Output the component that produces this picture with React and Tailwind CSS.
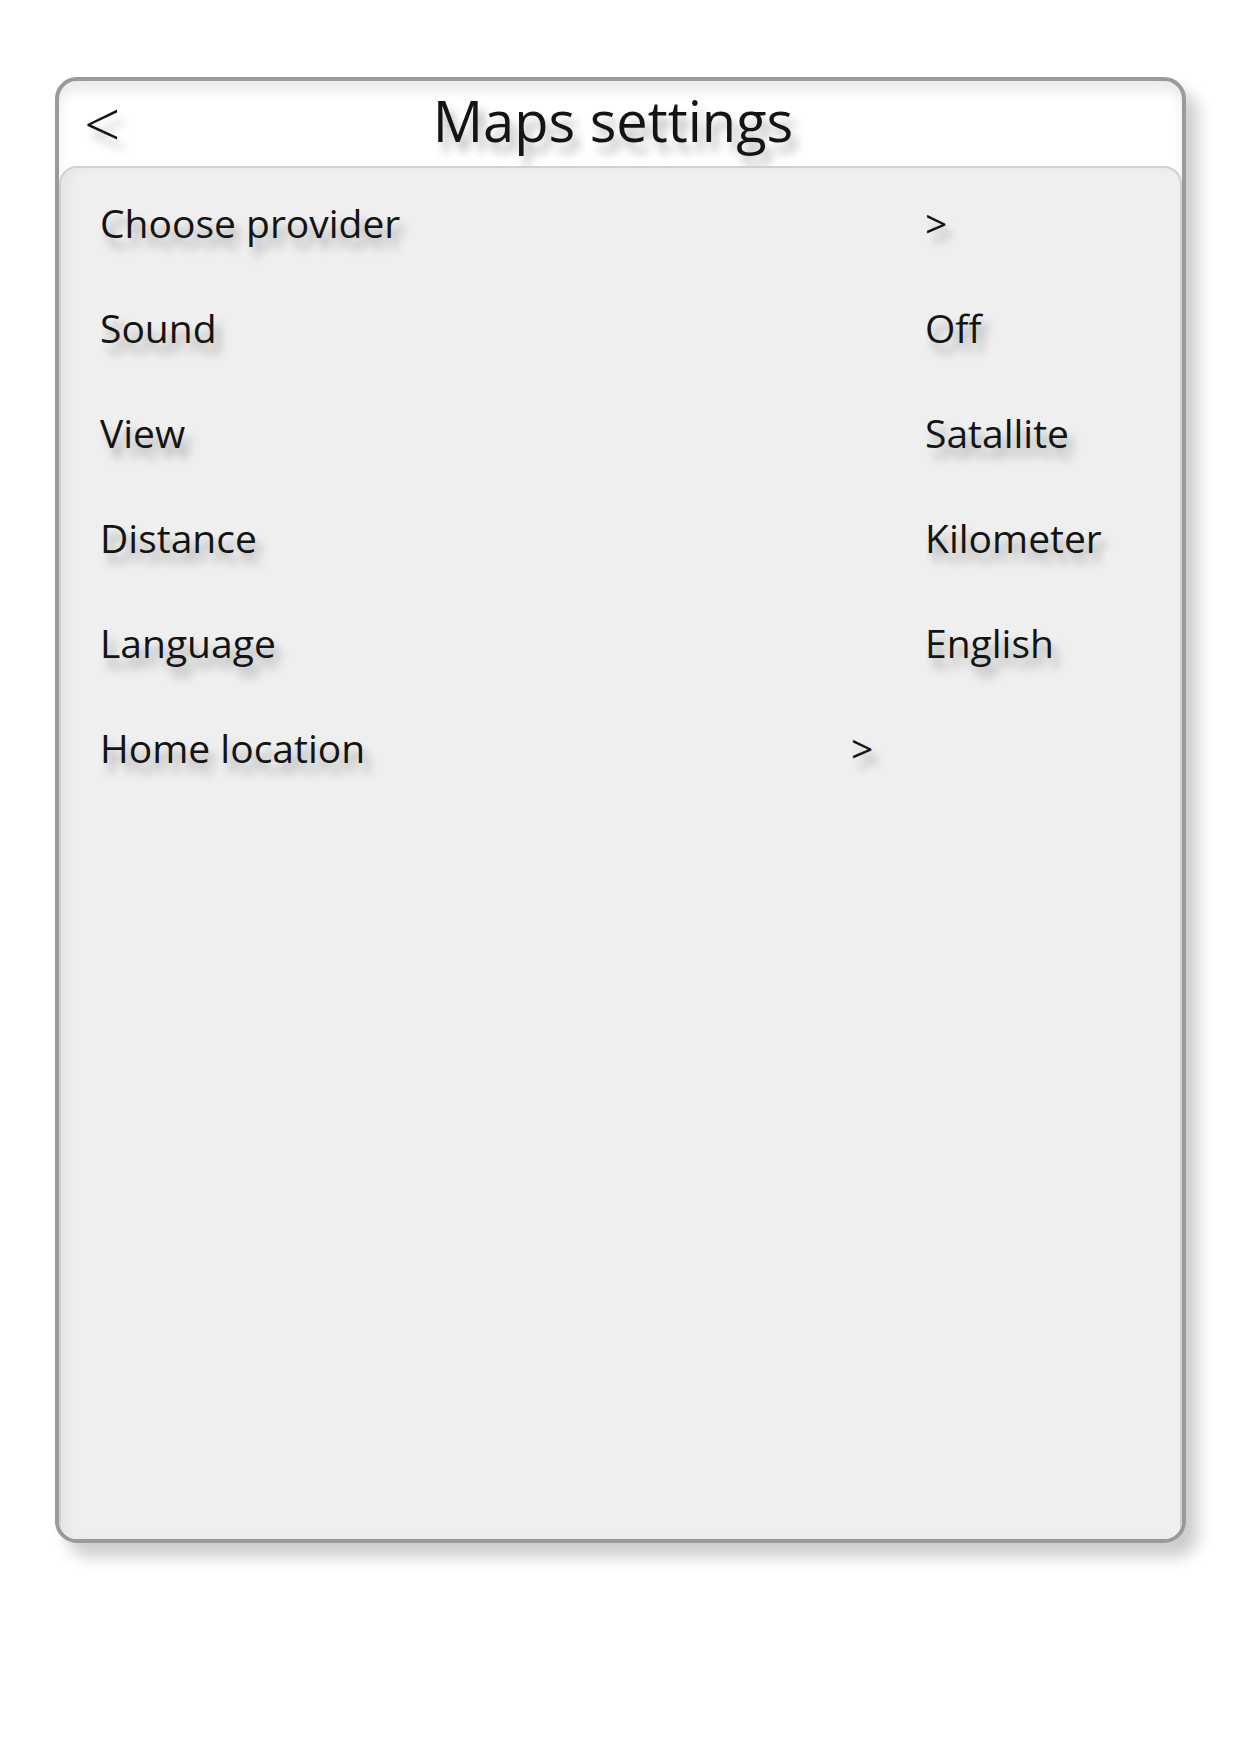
const rows = [
  { label: "Choose provider", value: ">" },
  { label: "Sound", value: "Off" },
  { label: "View", value: "Satallite" },
  { label: "Distance", value: "Kilometer" },
  { label: "Language", value: "English" },
];

const shadowText = "[text-shadow:6px_10px_10px_rgba(0,0,0,0.3)]";

const App = () => {
  return (
    <div className="w-[1240px] h-[1754px] bg-white pt-[77px] pl-[55px] font-['Open_Sans',sans-serif] text-[#141414]">
      {/* Card */}
      <div className="w-[1131px] h-[1466px] flex flex-col overflow-hidden rounded-[22px] border-4 border-[#9a9a9a] bg-white shadow-[inset_0_10px_12px_rgba(0,0,0,0.08),12px_14px_16px_rgba(0,0,0,0.2)]">
        {/* Header */}
        <div className="h-[85px] flex items-center pl-[25px] pr-[14px] shrink-0">
          <button className={`w-[60px] text-left text-[64px] leading-[80px] font-light ${shadowText}`}>
            &lt;
          </button>
          <h1 className={`flex-1 text-center text-[56px] leading-[71px] pb-[6px] pr-[86px] ${shadowText}`}>
            Maps settings
          </h1>
        </div>

        {/* Settings list */}
        <div className="flex-1 bg-[#efefef] rounded-t-[18px] border-t-2 border-x-2 border-[#d0d0d0] pt-[2px] pl-[39px] shadow-[inset_8px_0_10px_rgba(0,0,0,0.04)]">
          {rows.map((row) => (
            <div key={row.label} className="h-[105px] flex text-[39px] leading-[105px]">
              <span className={`w-[825px] ${shadowText}`}>{row.label}</span>
              <span className={shadowText}>{row.value}</span>
            </div>
          ))}
          <div className="h-[105px] flex text-[39px] leading-[105px]">
            <span className={`w-[751px] ${shadowText}`}>Home location</span>
            <span className={shadowText}>&gt;</span>
          </div>
        </div>
      </div>
    </div>
  );
};

export default App;
